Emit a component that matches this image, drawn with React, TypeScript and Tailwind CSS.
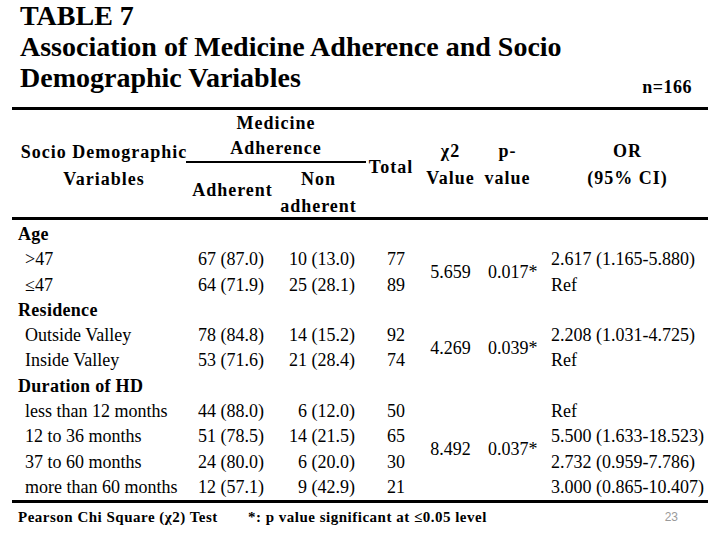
import React from 'react';

type Row =
  | { kind: 'cat'; label: string }
  | { kind: 'item'; label: string; adh: string; non: string; total: string; or: string };

const rows: Row[] = [
  { kind: 'cat', label: 'Age' },
  { kind: 'item', label: '>47', adh: '67 (87.0)', non: '10 (13.0)', total: '77', or: '2.617 (1.165-5.880)' },
  { kind: 'item', label: '≤47', adh: '64 (71.9)', non: '25 (28.1)', total: '89', or: 'Ref' },
  { kind: 'cat', label: 'Residence' },
  { kind: 'item', label: 'Outside Valley', adh: '78 (84.8)', non: '14 (15.2)', total: '92', or: '2.208 (1.031-4.725)' },
  { kind: 'item', label: 'Inside Valley', adh: '53 (71.6)', non: '21 (28.4)', total: '74', or: 'Ref' },
  { kind: 'cat', label: 'Duration of HD' },
  { kind: 'item', label: 'less than 12 months', adh: '44 (88.0)', non: '6 (12.0)', total: '50', or: 'Ref' },
  { kind: 'item', label: '12 to 36 months', adh: '51 (78.5)', non: '14 (21.5)', total: '65', or: '5.500 (1.633-18.523)' },
  { kind: 'item', label: '37 to 60 months', adh: '24 (80.0)', non: '6 (20.0)', total: '30', or: '2.732 (0.959-7.786)' },
  { kind: 'item', label: 'more than 60 months', adh: '12 (57.1)', non: '9 (42.9)', total: '21', or: '3.000 (0.865-10.407)' },
];

// chi square / p value cells spanning their group rows (1-based grid rows)
const tests = [
  { row: 'row-start-2 row-span-2', chi: '5.659', p: '0.017*' },
  { row: 'row-start-5 row-span-2', chi: '4.269', p: '0.039*' },
  { row: 'row-start-8 row-span-4', chi: '8.492', p: '0.037*' },
];

export default function App() {
  return (
    <div className="w-[720px] h-[540px] bg-white text-black overflow-hidden font-['Liberation_Serif',serif]">
      {/* Title */}
      <div className="pl-[20px] pr-[28px] flex items-end justify-between font-bold">
        <div className="text-[28px] leading-[31px]">
          <div>TABLE 7</div>
          <div>Association of Medicine Adherence and Socio</div>
          <div>Demographic Variables</div>
        </div>
        <div className="text-[18px] leading-[20px] mb-[-4px] tracking-[0.5px]">n=166</div>
      </div>

      <div className="mx-[12px] mt-[14px] border-t-[3px] border-black">
        {/* Header */}
        <div className="grid grid-cols-[178px_85px_87px_58px_61px_67px_159px] grid-rows-[27px_26px_54px] font-bold text-[18px] leading-[27px] tracking-[1px] text-center">
          <div className="row-span-3 pt-[29px] pl-[6px]">
            <div>Socio Demographic</div>
            <div>Variables</div>
          </div>
          <div className="col-span-2">Medicine</div>
          <div className="col-start-4 row-start-1 row-span-3 flex items-center justify-center pt-[7px]">Total</div>
          <div className="col-start-5 row-start-1 row-span-3 pt-[28px]">
            <div>χ2</div>
            <div>Value</div>
          </div>
          <div className="col-start-6 row-start-1 row-span-3 pt-[28px] pr-[14px]">
            <div>p-</div>
            <div>value</div>
          </div>
          <div className="col-start-7 row-start-1 row-span-3 pt-[28px]">
            <div>OR</div>
            <div>(95% CI)</div>
          </div>
          <div className="col-start-2 col-span-2 row-start-2 mx-[-4px] border-b-2 border-black leading-[22px]">Adherence</div>
          <div className="col-start-2 row-start-3 flex items-center justify-center">Adherent</div>
          <div className="col-start-3 row-start-3 pt-[3px]">
            <div>Non</div>
            <div>adherent</div>
          </div>
        </div>

        {/* Body */}
        <div className="border-t-[3px] border-black pt-[2px] grid grid-cols-[178px_85px_87px_58px_61px_67px_159px] grid-rows-[repeat(11,25.3px)] text-[18px] leading-[25.3px]">
          {rows.map((r, i) =>
            r.kind === 'cat' ? (
              <div key={i} className="col-span-7 col-start-1 pl-[6px] font-bold tracking-[0.3px]">
                {r.label}
              </div>
            ) : (
              <React.Fragment key={i}>
                <div className="col-start-1 pl-[13px] whitespace-nowrap">{r.label}</div>
                <div className="col-start-2 pl-[8px] whitespace-nowrap">{r.adh}</div>
                <div className="col-start-3 pr-[7px] text-right whitespace-nowrap">{r.non}</div>
                <div className="col-start-4 pl-[25px]">{r.total}</div>
                <div className="col-start-7 pl-[3px] whitespace-nowrap">{r.or}</div>
              </React.Fragment>
            )
          )}
          {tests.map((t, i) => (
            <React.Fragment key={'t' + i}>
              <div className={`col-start-5 ${t.row} flex items-center justify-center`}>{t.chi}</div>
              <div className={`col-start-6 ${t.row} flex items-center pl-[7px]`}>{t.p}</div>
            </React.Fragment>
          ))}
        </div>

        {/* Footer */}
        <div className="border-t-[3px] border-black flex items-center pt-[3px] text-[15px] leading-[22px] font-bold tracking-[0.5px]">
          <span className="pl-[6px] w-[236px]">Pearson Chi Square (χ2) Test</span>
          <span className="flex-1">*: p value significant at ≤0.05 level</span>
          <span className="mr-[30px] text-[12px] font-normal tracking-normal text-[#9a9a9a] font-['Liberation_Sans',sans-serif]">23</span>
        </div>
      </div>
    </div>
  );
}
